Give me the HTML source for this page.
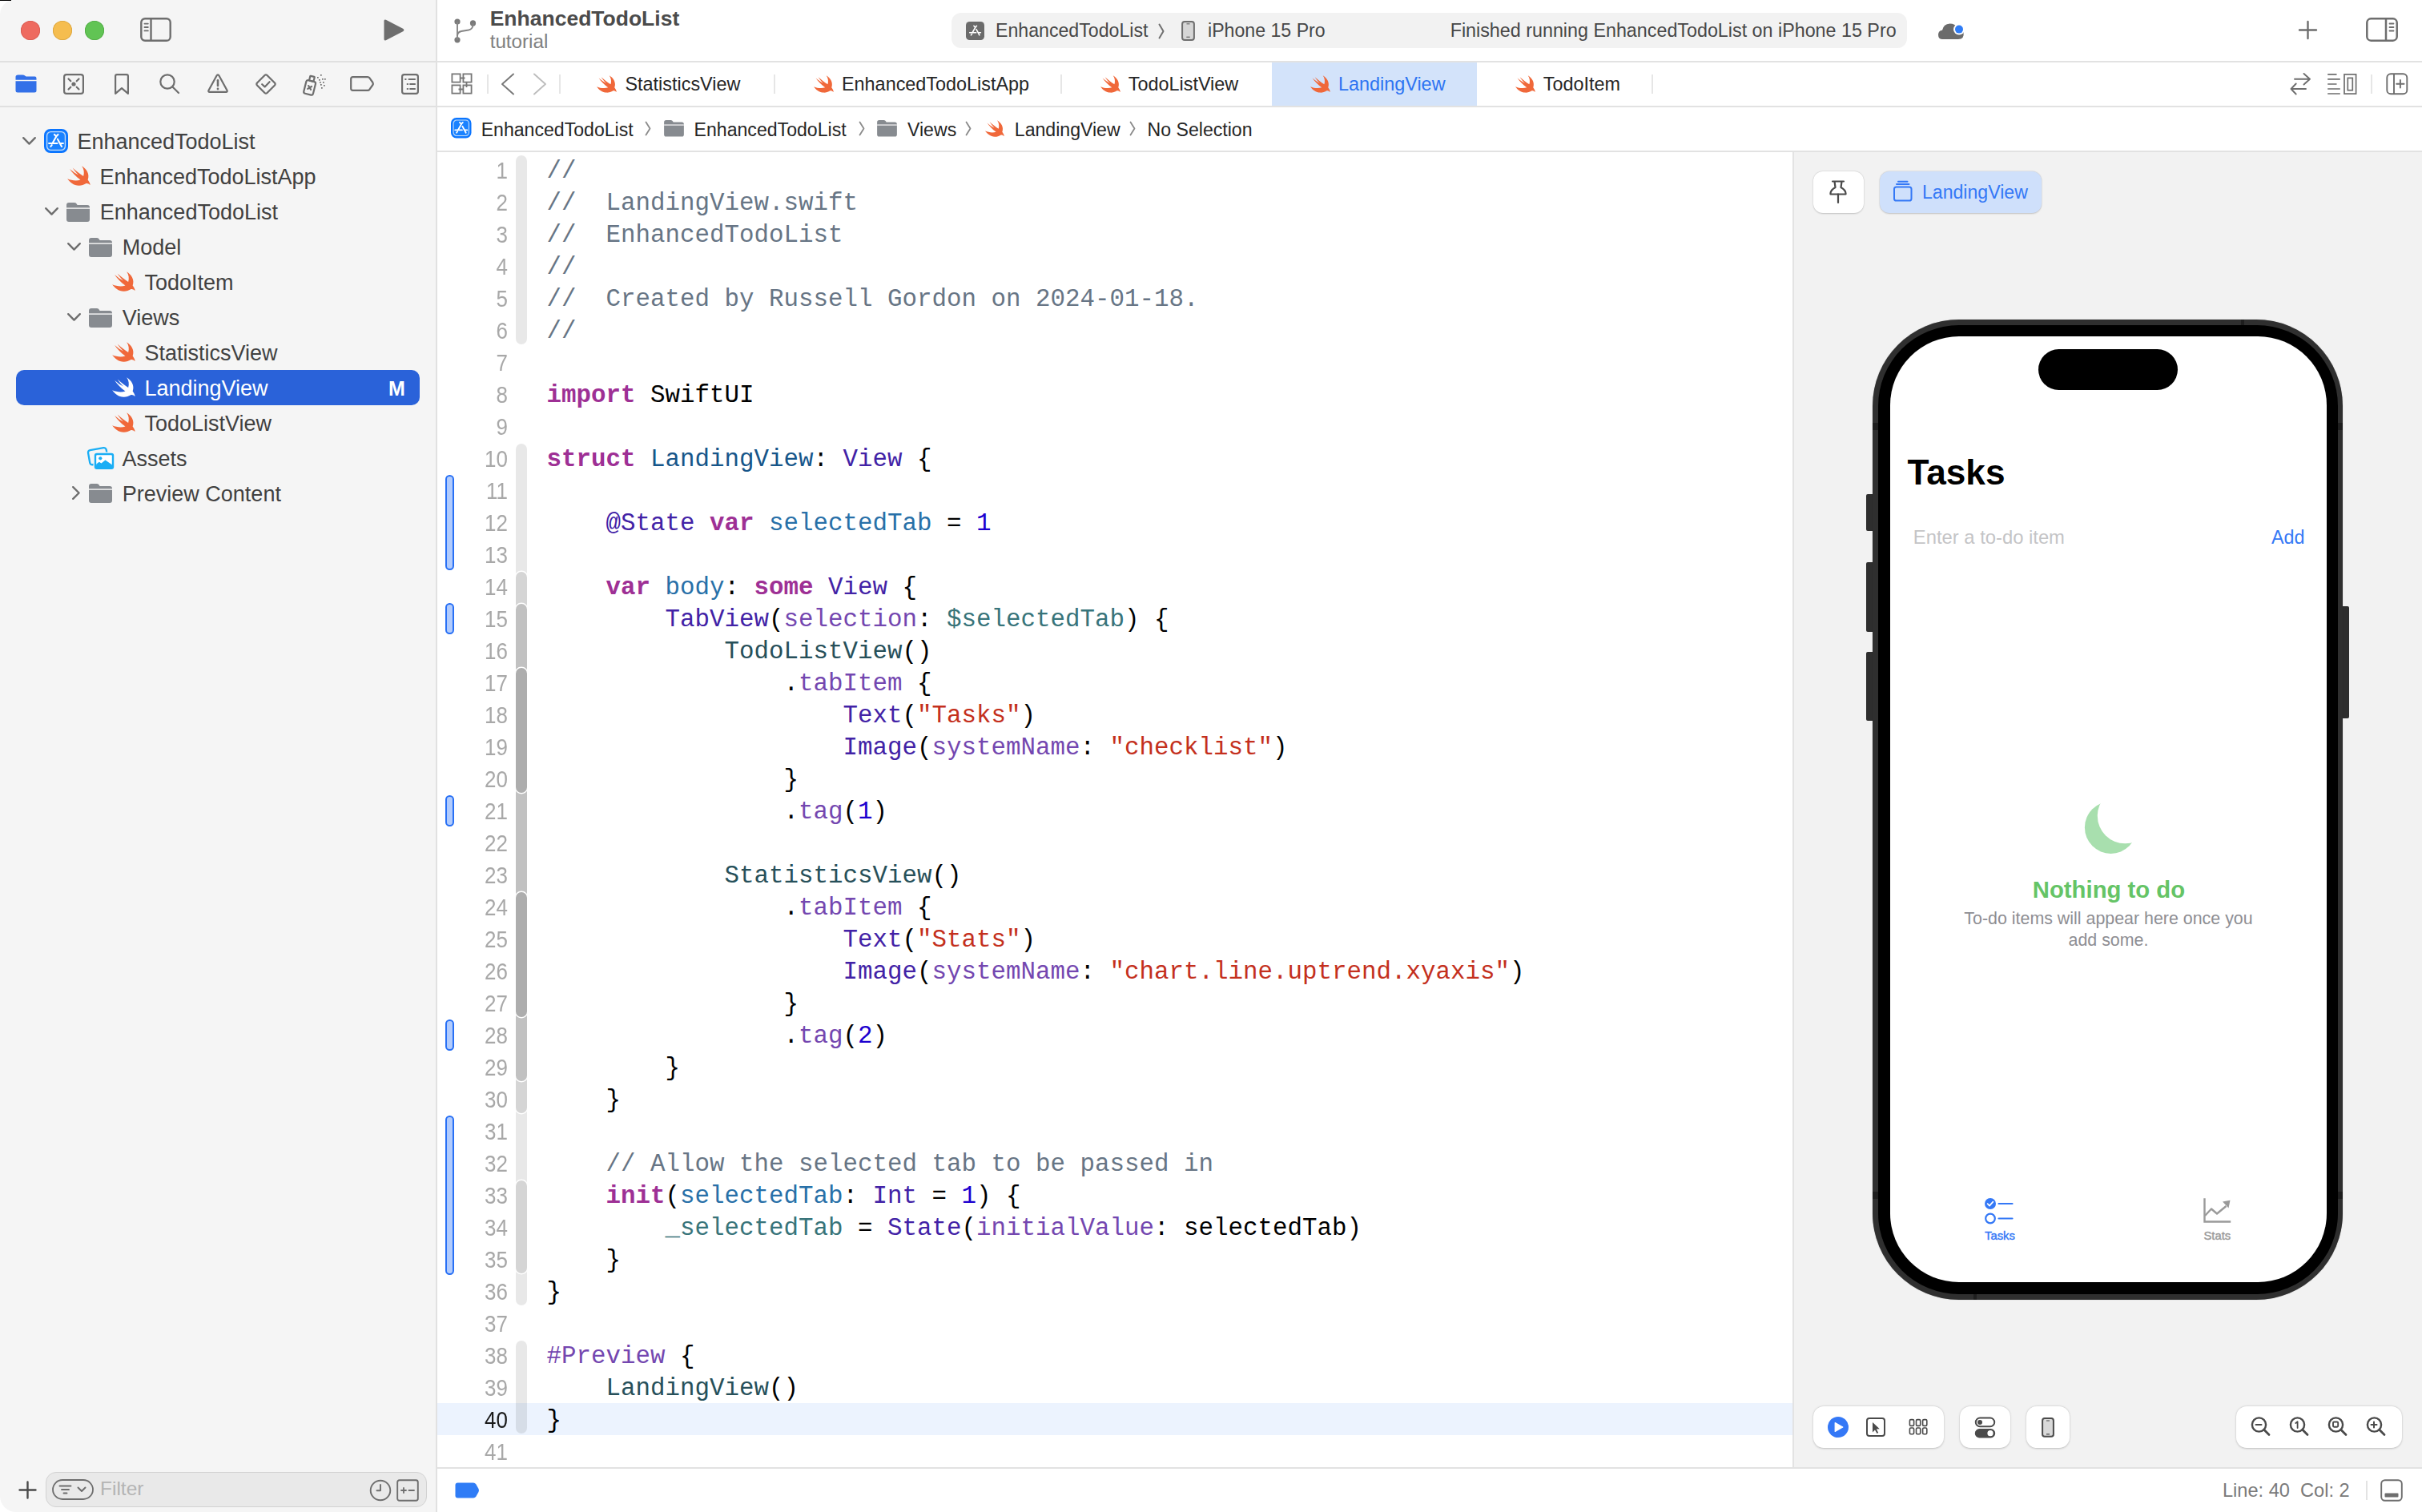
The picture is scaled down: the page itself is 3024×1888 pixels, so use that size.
<!DOCTYPE html><html><head><meta charset="utf-8"><title>Xcode</title><style>html,body{margin:0;padding:0;}body{width:3024px;height:1888px;position:relative;overflow:hidden;background:#ffffff;}svg{display:block}</style></head><body><div style="position:absolute;left:0px;top:0px;width:546px;height:1888px;background:#f5f5f5;border-top-left-radius:18px;border-bottom-left-radius:20px;"></div>
<div style="position:absolute;left:0px;top:0px;width:14px;height:1px;background:#000;"></div>
<div style="position:absolute;left:544px;top:0px;width:2px;height:1888px;background:#e1e1e1;"></div>
<div style="position:absolute;left:26px;top:26px;width:24px;height:24px;background:#ee6a5f;border-radius:50%;box-shadow:inset 0 0 0 0.8px #d65a50;"></div>
<div style="position:absolute;left:66px;top:26px;width:24px;height:24px;background:#f5bd4f;border-radius:50%;box-shadow:inset 0 0 0 0.8px #d9a33d;"></div>
<div style="position:absolute;left:106px;top:26px;width:24px;height:24px;background:#61c454;border-radius:50%;box-shadow:inset 0 0 0 0.8px #50a944;"></div>
<svg style="position:absolute;left:175px;top:22px;overflow:visible;" width="39" height="30" viewBox="0 0 39 30"><rect x="1.3" y="1.3" width="36.4" height="27.4" rx="4.8" fill="none" stroke="#6e6e6e" stroke-width="2.4"/><path d="M13.5,1.3 L13.5,28.7" stroke="#6e6e6e" stroke-width="2.4"/><path d="M5.5,7.6 L9.8,7.6 M5.5,12 L9.8,12 M5.5,16.4 L9.8,16.4" stroke="#6e6e6e" stroke-width="1.9" stroke-linecap="round"/></svg>
<svg style="position:absolute;left:478px;top:23px;overflow:visible;" width="28" height="30" viewBox="0 0 28 30"><path d="M1.5,3.2 Q1.5,0.6 3.9,1.8 L25.6,12.9 Q27.4,14.5 25.6,16.1 L3.9,27.2 Q1.5,28.4 1.5,25.8 Z" fill="#6e6e6e"/></svg>
<div style="position:absolute;left:0px;top:76px;width:544px;height:2px;background:#e0e0e0;"></div>
<div style="position:absolute;left:0px;top:132px;width:544px;height:2px;background:#e0e0e0;"></div>
<svg style="position:absolute;left:19px;top:93px;overflow:visible;" width="27" height="23" viewBox="0 0 26 23"><path d="M0,3 Q0,0.5 3,0.5 L8.5,0.5 Q10.5,0.5 12,1.8 L13,2.6 L24,2.6 Q26,2.6 26,5 L26,6.8 L0,6.8 Z" fill="#3370e8"/><path d="M0,8.3 L26,8.3 L26,20 Q26,22.5 23.5,22.5 L2.5,22.5 Q0,22.5 0,20 Z" fill="#3370e8"/></svg>
<svg style="position:absolute;left:79px;top:92px;overflow:visible;" width="26" height="26" viewBox="0 0 26 26"><rect x="1.1" y="1.1" width="23.8" height="23.8" rx="3" fill="none" stroke="#6e6e6e" stroke-width="2.2" stroke-linecap="round" stroke-linejoin="round"/><circle cx="13" cy="13" r="2.6" fill="#6e6e6e"/><path d="M6.5,6.5 L9.3,9.3 M19.5,6.5 L16.7,9.3 M6.5,19.5 L9.3,16.7 M19.5,19.5 L16.7,16.7" fill="none" stroke="#6e6e6e" stroke-width="2.2" stroke-linecap="round" stroke-linejoin="round"/></svg>
<svg style="position:absolute;left:143px;top:92px;overflow:visible;" width="18" height="26" viewBox="0 0 18 26"><path d="M1.1,24.9 L1.1,3 Q1.1,1.1 3,1.1 L15,1.1 Q16.9,1.1 16.9,3 L16.9,24.9 L9,18.2 Z" fill="none" stroke="#6e6e6e" stroke-width="2.2" stroke-linecap="round" stroke-linejoin="round"/></svg>
<svg style="position:absolute;left:199px;top:92px;overflow:visible;" width="26" height="26" viewBox="0 0 26 26"><circle cx="10" cy="10" r="8.7" fill="none" stroke="#6e6e6e" stroke-width="2.2" stroke-linecap="round" stroke-linejoin="round"/><path d="M16.5,16.5 L24,24" fill="none" stroke="#6e6e6e" stroke-width="2.2" stroke-linecap="round" stroke-linejoin="round" stroke-width="2.8"/></svg>
<svg style="position:absolute;left:259px;top:92px;overflow:visible;" width="26" height="24" viewBox="0 0 26 24"><path d="M13,1.4 Q13.9,1.4 14.5,2.5 L24.6,21 Q25.2,22.8 23.3,22.8 L2.7,22.8 Q0.8,22.8 1.4,21 L11.5,2.5 Q12.1,1.4 13,1.4 Z" fill="none" stroke="#6e6e6e" stroke-width="2.2" stroke-linecap="round" stroke-linejoin="round"/><path d="M13,8.2 L13,15" stroke="#6e6e6e" stroke-width="2.6" stroke-linecap="round"/><circle cx="13" cy="19" r="1.4" fill="#6e6e6e"/></svg>
<svg style="position:absolute;left:319px;top:92px;overflow:visible;" width="26" height="26" viewBox="0 0 26 26"><path d="M13,1.3 Q13.8,1.3 14.5,2 L24,11.5 Q25.3,13 24,14.5 L14.5,24 Q13,25.3 11.5,24 L2,14.5 Q0.7,13 2,11.5 L11.5,2 Q12.2,1.3 13,1.3 Z" fill="none" stroke="#6e6e6e" stroke-width="2.2" stroke-linecap="round" stroke-linejoin="round"/><path d="M8.2,13.2 L11.6,16.4 L17.6,10.2" fill="none" stroke="#6e6e6e" stroke-width="2.2" stroke-linecap="round" stroke-linejoin="round" stroke-width="2.4"/></svg>
<svg style="position:absolute;left:377px;top:91px;overflow:visible;" width="31" height="28" viewBox="0 0 31 28"><g transform="rotate(14 10 17)"><rect x="4" y="10" width="12" height="17" rx="2.2" fill="none" stroke="#6e6e6e" stroke-width="2.2" stroke-linecap="round" stroke-linejoin="round"/><rect x="7.2" y="4" width="5.6" height="6" rx="0.6" fill="none" stroke="#6e6e6e" stroke-width="2.2" stroke-linecap="round" stroke-linejoin="round"/><path d="M8,16.5 L12,20.5 M12,16.5 L8,20.5" fill="none" stroke="#6e6e6e" stroke-width="2.2" stroke-linecap="round" stroke-linejoin="round" stroke-width="1.8"/></g><rect x="19" y="5" width="1.7" height="1.7" fill="#6e6e6e"/><rect x="23" y="2" width="1.7" height="1.7" fill="#6e6e6e"/><rect x="21" y="8" width="1.7" height="1.7" fill="#6e6e6e"/><rect x="25" y="7" width="1.7" height="1.7" fill="#6e6e6e"/><rect x="28" y="7" width="1.7" height="1.7" fill="#6e6e6e"/><rect x="22" y="11" width="1.7" height="1.7" fill="#6e6e6e"/><rect x="26" y="11" width="1.7" height="1.7" fill="#6e6e6e"/><rect x="23" y="14" width="1.7" height="1.7" fill="#6e6e6e"/><rect x="27" y="15" width="1.7" height="1.7" fill="#6e6e6e"/><rect x="24" y="18" width="1.7" height="1.7" fill="#6e6e6e"/></svg>
<svg style="position:absolute;left:437px;top:95px;overflow:visible;" width="30" height="19" viewBox="0 0 30 19"><path d="M3.5,1.2 L22,1.2 Q23.5,1.2 24.4,2.3 L28.4,8 Q29.2,9.5 28.4,11 L24.4,16.7 Q23.5,17.8 22,17.8 L3.5,17.8 Q1.2,17.8 1.2,15.5 L1.2,3.5 Q1.2,1.2 3.5,1.2 Z" fill="none" stroke="#6e6e6e" stroke-width="2.2" stroke-linecap="round" stroke-linejoin="round"/></svg>
<svg style="position:absolute;left:501px;top:92px;overflow:visible;" width="22" height="26" viewBox="0 0 22 26"><rect x="1.1" y="1.1" width="19.8" height="23.8" rx="2.6" fill="none" stroke="#6e6e6e" stroke-width="2.2" stroke-linecap="round" stroke-linejoin="round"/><path d="M5.2,7 L5.6,7 M7.7,13 L8.1,13 M7.7,19 L8.1,19" fill="none" stroke="#6e6e6e" stroke-width="2.2" stroke-linecap="round" stroke-linejoin="round" stroke-width="1.8"/><path d="M9.6,7 L17,7 M11.2,13 L17,13 M11.2,19 L17,19" fill="none" stroke="#6e6e6e" stroke-width="2.2" stroke-linecap="round" stroke-linejoin="round" stroke-width="1.9"/></svg>
<div style="position:absolute;left:20px;top:462px;width:504px;height:44px;background:#2a62d9;border-radius:10px;"></div>
<svg style="position:absolute;left:27.5px;top:171.0px;overflow:visible;" width="17" height="10" viewBox="0 0 17 10"><path d="M1.2,1.2 L8.5,8.6 L15.8,1.2" fill="none" stroke="#6e6e6e" stroke-width="2.4" stroke-linecap="round" stroke-linejoin="round"/></svg>
<svg style="position:absolute;left:54.5px;top:161.0px;overflow:visible;" width="30" height="30" viewBox="0 0 30 30"><rect x="1" y="1" width="28" height="28" rx="7" fill="#1a82ff" stroke="#0a74ff" stroke-width="2"/><rect x="3.6" y="3.6" width="22.8" height="22.8" rx="4.8" fill="none" stroke="#c4dcf8" stroke-width="1.3"/><g stroke="#ffffff" stroke-width="2.1" stroke-linecap="round" stroke-linejoin="round" fill="none"><path d="M12.9,6.9 L15.2,9.3 L17.5,6.9"/><path d="M15.2,9.6 L10.7,17.6"/><path d="M6.1,18 L16.5,18 M20.4,18 L23.9,18"/><path d="M16.9,12.7 L22,22"/><path d="M8.3,22 L9.7,20.1"/></g></svg>
<div style="position:absolute;left:96.4px;top:164.1px;font-family:'Liberation Sans', sans-serif;font-size:27px;line-height:1;color:#414141;font-weight:normal;white-space:pre;">EnhancedTodoList</div>
<svg style="position:absolute;left:83.7px;top:207.45px;overflow:visible;" width="29" height="25" viewBox="0 0 29 25.3"><path d="M18.2,0.2 C24,4 28.5,10 25.8,17.7 C27.5,20 28.5,22 28.8,24.3 C27,22.8 25.5,22 23.8,22.3 C21,24 17.5,25.2 14.5,25.1 C8,25 3,20.5 0,16.4 C5,18.5 11.5,19.5 16.5,17.7 C11,14 6,8.5 3,4.1 C7,7.5 10.5,10 13.9,11.7 C11,8.5 8.5,5.5 6.6,2.5 C11,6.5 16,10.5 20.2,13.1 C21.5,9 21,4 18.2,0.2 Z" fill="#f0683a"/></svg>
<div style="position:absolute;left:124.4px;top:208.0px;font-family:'Liberation Sans', sans-serif;font-size:27px;line-height:1;color:#414141;font-weight:normal;white-space:pre;">EnhancedTodoListApp</div>
<svg style="position:absolute;left:55.5px;top:258.9px;overflow:visible;" width="17" height="10" viewBox="0 0 17 10"><path d="M1.2,1.2 L8.5,8.6 L15.8,1.2" fill="none" stroke="#6e6e6e" stroke-width="2.4" stroke-linecap="round" stroke-linejoin="round"/></svg>
<svg style="position:absolute;left:83.0px;top:252.7px;overflow:visible;" width="29" height="24" viewBox="0 0 29 24"><path d="M0,3 Q0,0 3,0 L10,0 Q12,0 13,2 L13.5,3 L26,3 Q29,3 29,6 L29,21 Q29,24 26,24 L3,24 Q0,24 0,21 Z" fill="#878b90"/><rect x="0" y="6.3" width="29" height="1.6" fill="#f5f5f5" opacity="0.9"/></svg>
<div style="position:absolute;left:124.8px;top:251.9px;font-family:'Liberation Sans', sans-serif;font-size:27px;line-height:1;color:#414141;font-weight:normal;white-space:pre;">EnhancedTodoList</div>
<svg style="position:absolute;left:83.5px;top:302.85px;overflow:visible;" width="17" height="10" viewBox="0 0 17 10"><path d="M1.2,1.2 L8.5,8.6 L15.8,1.2" fill="none" stroke="#6e6e6e" stroke-width="2.4" stroke-linecap="round" stroke-linejoin="round"/></svg>
<svg style="position:absolute;left:111.0px;top:296.65000000000003px;overflow:visible;" width="29" height="24" viewBox="0 0 29 24"><path d="M0,3 Q0,0 3,0 L10,0 Q12,0 13,2 L13.5,3 L26,3 Q29,3 29,6 L29,21 Q29,24 26,24 L3,24 Q0,24 0,21 Z" fill="#878b90"/><rect x="0" y="6.3" width="29" height="1.6" fill="#f5f5f5" opacity="0.9"/></svg>
<div style="position:absolute;left:152.8px;top:295.9px;font-family:'Liberation Sans', sans-serif;font-size:27px;line-height:1;color:#414141;font-weight:normal;white-space:pre;">Model</div>
<svg style="position:absolute;left:139.7px;top:339.3px;overflow:visible;" width="29" height="25" viewBox="0 0 29 25.3"><path d="M18.2,0.2 C24,4 28.5,10 25.8,17.7 C27.5,20 28.5,22 28.8,24.3 C27,22.8 25.5,22 23.8,22.3 C21,24 17.5,25.2 14.5,25.1 C8,25 3,20.5 0,16.4 C5,18.5 11.5,19.5 16.5,17.7 C11,14 6,8.5 3,4.1 C7,7.5 10.5,10 13.9,11.7 C11,8.5 8.5,5.5 6.6,2.5 C11,6.5 16,10.5 20.2,13.1 C21.5,9 21,4 18.2,0.2 Z" fill="#f0683a"/></svg>
<div style="position:absolute;left:180.4px;top:339.9px;font-family:'Liberation Sans', sans-serif;font-size:27px;line-height:1;color:#414141;font-weight:normal;white-space:pre;">TodoItem</div>
<svg style="position:absolute;left:83.5px;top:390.75px;overflow:visible;" width="17" height="10" viewBox="0 0 17 10"><path d="M1.2,1.2 L8.5,8.6 L15.8,1.2" fill="none" stroke="#6e6e6e" stroke-width="2.4" stroke-linecap="round" stroke-linejoin="round"/></svg>
<svg style="position:absolute;left:111.0px;top:384.55px;overflow:visible;" width="29" height="24" viewBox="0 0 29 24"><path d="M0,3 Q0,0 3,0 L10,0 Q12,0 13,2 L13.5,3 L26,3 Q29,3 29,6 L29,21 Q29,24 26,24 L3,24 Q0,24 0,21 Z" fill="#878b90"/><rect x="0" y="6.3" width="29" height="1.6" fill="#f5f5f5" opacity="0.9"/></svg>
<div style="position:absolute;left:152.8px;top:383.8px;font-family:'Liberation Sans', sans-serif;font-size:27px;line-height:1;color:#414141;font-weight:normal;white-space:pre;">Views</div>
<svg style="position:absolute;left:139.7px;top:427.20000000000005px;overflow:visible;" width="29" height="25" viewBox="0 0 29 25.3"><path d="M18.2,0.2 C24,4 28.5,10 25.8,17.7 C27.5,20 28.5,22 28.8,24.3 C27,22.8 25.5,22 23.8,22.3 C21,24 17.5,25.2 14.5,25.1 C8,25 3,20.5 0,16.4 C5,18.5 11.5,19.5 16.5,17.7 C11,14 6,8.5 3,4.1 C7,7.5 10.5,10 13.9,11.7 C11,8.5 8.5,5.5 6.6,2.5 C11,6.5 16,10.5 20.2,13.1 C21.5,9 21,4 18.2,0.2 Z" fill="#f0683a"/></svg>
<div style="position:absolute;left:180.4px;top:427.8px;font-family:'Liberation Sans', sans-serif;font-size:27px;line-height:1;color:#414141;font-weight:normal;white-space:pre;">StatisticsView</div>
<svg style="position:absolute;left:139.7px;top:471.15000000000003px;overflow:visible;" width="29" height="25" viewBox="0 0 29 25.3"><path d="M18.2,0.2 C24,4 28.5,10 25.8,17.7 C27.5,20 28.5,22 28.8,24.3 C27,22.8 25.5,22 23.8,22.3 C21,24 17.5,25.2 14.5,25.1 C8,25 3,20.5 0,16.4 C5,18.5 11.5,19.5 16.5,17.7 C11,14 6,8.5 3,4.1 C7,7.5 10.5,10 13.9,11.7 C11,8.5 8.5,5.5 6.6,2.5 C11,6.5 16,10.5 20.2,13.1 C21.5,9 21,4 18.2,0.2 Z" fill="#ffffff"/></svg>
<div style="position:absolute;left:180.4px;top:471.7px;font-family:'Liberation Sans', sans-serif;font-size:27px;line-height:1;color:#ffffff;font-weight:normal;white-space:pre;">LandingView</div>
<svg style="position:absolute;left:139.7px;top:515.1px;overflow:visible;" width="29" height="25" viewBox="0 0 29 25.3"><path d="M18.2,0.2 C24,4 28.5,10 25.8,17.7 C27.5,20 28.5,22 28.8,24.3 C27,22.8 25.5,22 23.8,22.3 C21,24 17.5,25.2 14.5,25.1 C8,25 3,20.5 0,16.4 C5,18.5 11.5,19.5 16.5,17.7 C11,14 6,8.5 3,4.1 C7,7.5 10.5,10 13.9,11.7 C11,8.5 8.5,5.5 6.6,2.5 C11,6.5 16,10.5 20.2,13.1 C21.5,9 21,4 18.2,0.2 Z" fill="#f0683a"/></svg>
<div style="position:absolute;left:180.4px;top:515.6px;font-family:'Liberation Sans', sans-serif;font-size:27px;line-height:1;color:#414141;font-weight:normal;white-space:pre;">TodoListView</div>
<svg style="position:absolute;left:108px;top:555.55px;overflow:visible;" width="36" height="32" viewBox="0 0 36 32"><g transform="rotate(-10 14 14)"><rect x="3" y="4.5" width="23" height="18.5" rx="3" fill="none" stroke="#1aaef5" stroke-width="2.3"/></g><rect x="8.5" y="8.5" width="26" height="22" rx="3.5" fill="#f5f5f5"/><rect x="9.8" y="9.8" width="24.4" height="20.2" rx="3" fill="#1aaef5"/><rect x="12.2" y="12.2" width="19.6" height="13" rx="1" fill="#ffffff"/><circle cx="17.3" cy="16.3" r="2.1" fill="#1aaef5"/><path d="M12.2,26 L12.2,23.6 L15.8,20.8 L18.5,22.6 L23.5,18.6 L31.8,24.2 L31.8,26 Z" fill="#1aaef5"/></svg>
<div style="position:absolute;left:152.4px;top:559.6px;font-family:'Liberation Sans', sans-serif;font-size:27px;line-height:1;color:#414141;font-weight:normal;white-space:pre;">Assets</div>
<svg style="position:absolute;left:89.5px;top:607.0px;overflow:visible;" width="10" height="17" viewBox="0 0 10 17"><path d="M1.2,1.2 L8.6,8.5 L1.2,15.8" fill="none" stroke="#6e6e6e" stroke-width="2.4" stroke-linecap="round" stroke-linejoin="round"/></svg>
<svg style="position:absolute;left:111.0px;top:604.3px;overflow:visible;" width="29" height="24" viewBox="0 0 29 24"><path d="M0,3 Q0,0 3,0 L10,0 Q12,0 13,2 L13.5,3 L26,3 Q29,3 29,6 L29,21 Q29,24 26,24 L3,24 Q0,24 0,21 Z" fill="#878b90"/><rect x="0" y="6.3" width="29" height="1.6" fill="#f5f5f5" opacity="0.9"/></svg>
<div style="position:absolute;left:152.8px;top:603.5px;font-family:'Liberation Sans', sans-serif;font-size:27px;line-height:1;color:#414141;font-weight:normal;white-space:pre;">Preview Content</div>
<div style="position:absolute;left:485.0px;top:473.4px;font-family:'Liberation Sans', sans-serif;font-size:25px;line-height:1;color:#ffffff;font-weight:bold;white-space:pre;">M</div>
<svg style="position:absolute;left:23px;top:1849px;overflow:visible;" width="23" height="23" viewBox="0 0 23 23"><path d="M11.5,1.5 L11.5,21.5 M1.5,11.5 L21.5,11.5" stroke="#4a4a4a" stroke-width="2.4" stroke-linecap="round"/></svg>
<div style="position:absolute;left:57px;top:1838px;width:476px;height:44px;box-sizing:border-box;background:#e9e9e9;border:1px solid #d2d2d2;border-radius:13px;"></div>
<svg style="position:absolute;left:65px;top:1847px;overflow:visible;" width="52" height="26" viewBox="0 0 52 26"><rect x="1" y="1" width="50" height="24" rx="12" fill="none" stroke="#6e6e6e" stroke-width="1.8"/><path d="M9.5,8.5 L23.5,8.5 M12,13 L21,13 M14.5,17.5 L18.5,17.5" stroke="#6e6e6e" stroke-width="1.9" stroke-linecap="round"/><path d="M32.5,10.5 L37,15 L41.5,10.5" fill="none" stroke="#6e6e6e" stroke-width="2" stroke-linecap="round" stroke-linejoin="round"/></svg>
<div style="position:absolute;left:125.0px;top:1847.2px;font-family:'Liberation Sans', sans-serif;font-size:24.5px;line-height:1;color:#b4b4b4;font-weight:normal;white-space:pre;">Filter</div>
<svg style="position:absolute;left:461px;top:1847px;overflow:visible;" width="28" height="28" viewBox="0 0 28 28"><circle cx="14" cy="14" r="12.3" fill="none" stroke="#6e6e6e" stroke-width="1.9"/><path d="M14,7 L14,14.3 L9.5,14.3" fill="none" stroke="#6e6e6e" stroke-width="1.9" stroke-linecap="round" stroke-linejoin="round"/></svg>
<svg style="position:absolute;left:495px;top:1847px;overflow:visible;" width="28" height="28" viewBox="0 0 28 28"><rect x="1.2" y="1.2" width="25.6" height="25.6" rx="2.5" fill="none" stroke="#6e6e6e" stroke-width="1.9"/><path d="M6,14 L12,14 M9,11 L9,17 M15.5,14 L22,14" stroke="#6e6e6e" stroke-width="1.8" stroke-linecap="round"/></svg>
<div style="position:absolute;left:546px;top:0px;width:2478px;height:76px;background:#ffffff;"></div>
<div style="position:absolute;left:546px;top:76px;width:2478px;height:2px;background:#e2e2e2;"></div>
<div style="position:absolute;left:546px;top:132px;width:2478px;height:2px;background:#e2e2e2;"></div>
<div style="position:absolute;left:546px;top:188px;width:2478px;height:2px;background:#e2e2e2;"></div>
<svg style="position:absolute;left:565px;top:22px;overflow:visible;" width="32" height="33" viewBox="0 0 32 33"><circle cx="6" cy="5" r="3.6" fill="#7a7a7a"/><circle cx="6" cy="27.8" r="3.6" fill="#7a7a7a"/><circle cx="25.5" cy="6.9" r="3.6" fill="#7a7a7a"/><path d="M6,5 L6,27.8" stroke="#858585" stroke-width="1.9"/><path d="M25.5,6.9 L25.5,9.5 Q25,14.5 20,15.5 L11,17 Q6,18 6,23" fill="none" stroke="#858585" stroke-width="1.9"/></svg>
<div style="position:absolute;left:611.7px;top:10.0px;font-family:'Liberation Sans', sans-serif;font-size:26.5px;line-height:1;color:#4b4b4b;font-weight:bold;white-space:pre;">EnhancedTodoList</div>
<div style="position:absolute;left:611.7px;top:40.4px;font-family:'Liberation Sans', sans-serif;font-size:24.2px;line-height:1;color:#808080;font-weight:normal;white-space:pre;">tutorial</div>
<div style="position:absolute;left:1188px;top:16px;width:1193px;height:44px;background:#f2f2f2;border-radius:12px;"></div>
<svg style="position:absolute;left:1206px;top:27px;overflow:visible;" width="23" height="23" viewBox="0 0 23 23"><rect x="0" y="0" width="23" height="23" rx="4.6" fill="#6b6b6b"/><g stroke="#ffffff" stroke-width="1.6" stroke-linecap="round" stroke-linejoin="round" fill="none"><path d="M9.9,5.3 L11.7,7.1 L13.5,5.3"/><path d="M11.7,7.4 L8.2,13.5"/><path d="M4.7,13.8 L12.7,13.8 M15.7,13.8 L18.4,13.8"/><path d="M13,9.7 L16.9,16.9"/><path d="M6.4,16.9 L7.5,15.4"/></g></svg>
<div style="position:absolute;left:1243.0px;top:27.3px;font-family:'Liberation Sans', sans-serif;font-size:23.15px;line-height:1;color:#474747;font-weight:normal;white-space:pre;">EnhancedTodoList</div>
<svg style="position:absolute;left:1446px;top:28.5px;overflow:visible;" width="8" height="20" viewBox="0 0 8 20"><path d="M1.5,1.5 L6.5,10.0 L1.5,18.5" fill="none" stroke="#707070" stroke-width="2.0" stroke-linecap="round" stroke-linejoin="round"/></svg>
<svg style="position:absolute;left:1475px;top:26px;overflow:visible;" width="17" height="25" viewBox="0 0 17 25"><rect x="1.1" y="1.1" width="14.8" height="22.8" rx="3" fill="#d6d6d6" stroke="#6e6e6e" stroke-width="2"/><path d="M6.3,20.3 L10.7,20.3" stroke="#6e6e6e" stroke-width="1.3"/><path d="M6.5,3.8 L10.5,3.8" stroke="#6e6e6e" stroke-width="1.2"/></svg>
<div style="position:absolute;left:1508.0px;top:27.3px;font-family:'Liberation Sans', sans-serif;font-size:23.15px;line-height:1;color:#474747;font-weight:normal;white-space:pre;">iPhone 15 Pro</div>
<div style="position:absolute;left:1810.7px;top:27.2px;font-family:'Liberation Sans', sans-serif;font-size:23.3px;line-height:1;color:#474747;font-weight:normal;white-space:pre;">Finished running EnhancedTodoList on iPhone 15 Pro</div>
<svg style="position:absolute;left:2419px;top:25px;overflow:visible;" width="36" height="26" viewBox="0 0 36 26"><path d="M6.5,24 Q1,24 1,18.5 Q1,13.5 6,12.8 Q7.5,5 15.5,4.5 Q22,4.5 24.5,9.5 Q31,9.5 32.5,15 Q34,24 26,24 Z" fill="#6b6b6b"/><circle cx="27" cy="11.6" r="7" fill="#ffffff"/><circle cx="27" cy="11.6" r="5" fill="#2f7cf6"/></svg>
<svg style="position:absolute;left:2869px;top:25px;overflow:visible;" width="25" height="25" viewBox="0 0 25 25"><path d="M12.5,2 L12.5,23 M2,12.5 L23,12.5" stroke="#6e6e6e" stroke-width="2.4" stroke-linecap="round"/></svg>
<svg style="position:absolute;left:2954px;top:22px;overflow:visible;" width="40" height="30" viewBox="0 0 40 30"><rect x="1.3" y="1.3" width="37.4" height="27.4" rx="5" fill="none" stroke="#6e6e6e" stroke-width="2.5"/><path d="M25,1.3 L25,28.7" stroke="#6e6e6e" stroke-width="2.5"/><path d="M29.5,7.5 L34.5,7.5 M29.5,12 L34.5,12 M29.5,16.5 L34.5,16.5" stroke="#6e6e6e" stroke-width="1.8" stroke-linecap="round"/></svg>
<div style="position:absolute;left:1588px;top:78px;width:256px;height:54px;background:#d3e3fa;"></div>
<svg style="position:absolute;left:563px;top:91px;overflow:visible;" width="28" height="28" viewBox="0 0 28 28"><g fill="none" stroke="#777" stroke-width="1.8"><rect x="1.4" y="1.4" width="10.2" height="10.2"/><rect x="15.4" y="1.4" width="10.2" height="10.2"/><rect x="1.4" y="15.4" width="10.2" height="10.2"/><rect x="15.4" y="15.4" width="10.2" height="10.2"/><path d="M11.6,6.5 L17.5,6.5 M19.5,11.6 L19.5,18 M9.5,20.5 L15.4,20.5"/></g></svg>
<div style="position:absolute;left:608px;top:93px;width:2px;height:24px;background:#e6e6e6;"></div>
<svg style="position:absolute;left:625px;top:91px;overflow:visible;" width="18" height="28" viewBox="0 0 18 28"><path d="M16,1.5 L2,14 L16,26.5" fill="none" stroke="#787878" stroke-width="1.9" stroke-linecap="round" stroke-linejoin="round"/></svg>
<svg style="position:absolute;left:665px;top:91px;overflow:visible;" width="18" height="28" viewBox="0 0 18 28"><path d="M2,1.5 L16,14 L2,26.5" fill="none" stroke="#bdbdbd" stroke-width="1.9" stroke-linecap="round" stroke-linejoin="round"/></svg>
<div style="position:absolute;left:698px;top:93px;width:2px;height:24px;background:#e6e6e6;"></div>
<svg style="position:absolute;left:745px;top:94px;overflow:visible;" width="25" height="21.8" viewBox="0 0 29 25.3"><path d="M18.2,0.2 C24,4 28.5,10 25.8,17.7 C27.5,20 28.5,22 28.8,24.3 C27,22.8 25.5,22 23.8,22.3 C21,24 17.5,25.2 14.5,25.1 C8,25 3,20.5 0,16.4 C5,18.5 11.5,19.5 16.5,17.7 C11,14 6,8.5 3,4.1 C7,7.5 10.5,10 13.9,11.7 C11,8.5 8.5,5.5 6.6,2.5 C11,6.5 16,10.5 20.2,13.1 C21.5,9 21,4 18.2,0.2 Z" fill="#f0683a"/></svg>
<div style="position:absolute;left:780.5px;top:93.7px;font-family:'Liberation Sans', sans-serif;font-size:23.4px;line-height:1;color:#262626;font-weight:normal;white-space:pre;width:149.5px">StatisticsView</div>
<svg style="position:absolute;left:1015.7px;top:94px;overflow:visible;" width="25" height="21.8" viewBox="0 0 29 25.3"><path d="M18.2,0.2 C24,4 28.5,10 25.8,17.7 C27.5,20 28.5,22 28.8,24.3 C27,22.8 25.5,22 23.8,22.3 C21,24 17.5,25.2 14.5,25.1 C8,25 3,20.5 0,16.4 C5,18.5 11.5,19.5 16.5,17.7 C11,14 6,8.5 3,4.1 C7,7.5 10.5,10 13.9,11.7 C11,8.5 8.5,5.5 6.6,2.5 C11,6.5 16,10.5 20.2,13.1 C21.5,9 21,4 18.2,0.2 Z" fill="#f0683a"/></svg>
<div style="position:absolute;left:1051.0px;top:93.7px;font-family:'Liberation Sans', sans-serif;font-size:23.4px;line-height:1;color:#262626;font-weight:normal;white-space:pre;width:236px">EnhancedTodoListApp</div>
<svg style="position:absolute;left:1373.5px;top:94px;overflow:visible;" width="25" height="21.8" viewBox="0 0 29 25.3"><path d="M18.2,0.2 C24,4 28.5,10 25.8,17.7 C27.5,20 28.5,22 28.8,24.3 C27,22.8 25.5,22 23.8,22.3 C21,24 17.5,25.2 14.5,25.1 C8,25 3,20.5 0,16.4 C5,18.5 11.5,19.5 16.5,17.7 C11,14 6,8.5 3,4.1 C7,7.5 10.5,10 13.9,11.7 C11,8.5 8.5,5.5 6.6,2.5 C11,6.5 16,10.5 20.2,13.1 C21.5,9 21,4 18.2,0.2 Z" fill="#f0683a"/></svg>
<div style="position:absolute;left:1408.8px;top:93.7px;font-family:'Liberation Sans', sans-serif;font-size:23.4px;line-height:1;color:#262626;font-weight:normal;white-space:pre;width:142.2px">TodoListView</div>
<svg style="position:absolute;left:1635.8px;top:94px;overflow:visible;" width="25" height="21.8" viewBox="0 0 29 25.3"><path d="M18.2,0.2 C24,4 28.5,10 25.8,17.7 C27.5,20 28.5,22 28.8,24.3 C27,22.8 25.5,22 23.8,22.3 C21,24 17.5,25.2 14.5,25.1 C8,25 3,20.5 0,16.4 C5,18.5 11.5,19.5 16.5,17.7 C11,14 6,8.5 3,4.1 C7,7.5 10.5,10 13.9,11.7 C11,8.5 8.5,5.5 6.6,2.5 C11,6.5 16,10.5 20.2,13.1 C21.5,9 21,4 18.2,0.2 Z" fill="#f0683a"/></svg>
<div style="position:absolute;left:1671.0px;top:93.7px;font-family:'Liberation Sans', sans-serif;font-size:23.4px;line-height:1;color:#2d74f2;font-weight:normal;white-space:pre;width:136px">LandingView</div>
<svg style="position:absolute;left:1891.6px;top:94px;overflow:visible;" width="25" height="21.8" viewBox="0 0 29 25.3"><path d="M18.2,0.2 C24,4 28.5,10 25.8,17.7 C27.5,20 28.5,22 28.8,24.3 C27,22.8 25.5,22 23.8,22.3 C21,24 17.5,25.2 14.5,25.1 C8,25 3,20.5 0,16.4 C5,18.5 11.5,19.5 16.5,17.7 C11,14 6,8.5 3,4.1 C7,7.5 10.5,10 13.9,11.7 C11,8.5 8.5,5.5 6.6,2.5 C11,6.5 16,10.5 20.2,13.1 C21.5,9 21,4 18.2,0.2 Z" fill="#f0683a"/></svg>
<div style="position:absolute;left:1926.8px;top:93.7px;font-family:'Liberation Sans', sans-serif;font-size:23.4px;line-height:1;color:#262626;font-weight:normal;white-space:pre;width:99.2px">TodoItem</div>
<div style="position:absolute;left:966px;top:93px;width:2px;height:24px;background:#e6e6e6;"></div>
<div style="position:absolute;left:1324px;top:93px;width:2px;height:24px;background:#e6e6e6;"></div>
<div style="position:absolute;left:2062px;top:93px;width:2px;height:24px;background:#e6e6e6;"></div>
<svg style="position:absolute;left:2858px;top:90px;overflow:visible;" width="28" height="30" viewBox="0 0 28 30"><g fill="none" stroke="#6e6e6e" stroke-width="1.9" stroke-linecap="round" stroke-linejoin="round"><path d="M7,8.8 L26,8.8 M18.5,2 L26,8.8 L18.5,15.5"/><path d="M21,21 L2.5,21 M8.7,14.5 L2.5,21 L8.7,27.5"/></g></svg>
<svg style="position:absolute;left:2905px;top:91px;overflow:visible;" width="38" height="28" viewBox="0 0 38 28"><g fill="none" stroke="#6e6e6e" stroke-width="1.7"><path d="M1.2,1.9 L12.5,1.9 M1.2,7.9 L16.8,7.9 M1.2,14 L12.5,14 M1.2,20 L16.8,20 M1.2,26 L16.8,26"/><rect x="22" y="1.9" width="14.6" height="24.2"/><rect x="26.3" y="6.4" width="6" height="15.3"/></g></svg>
<div style="position:absolute;left:2960px;top:93px;width:2px;height:24px;background:#e6e6e6;"></div>
<svg style="position:absolute;left:2979px;top:91px;overflow:visible;" width="28" height="28" viewBox="0 0 28 28"><g fill="none" stroke="#6e6e6e" stroke-width="1.9"><rect x="1.3" y="1.3" width="25" height="25" rx="4.8"/><path d="M10,1.3 L10,26.3"/><path d="M17.9,9 L17.9,18.5 M13.2,13.8 L22.6,13.8" stroke-linecap="round"/></g></svg>
<svg style="position:absolute;left:563px;top:147px;overflow:visible;" width="25.5" height="25.5" viewBox="0 0 30 30"><rect x="1" y="1" width="28" height="28" rx="7" fill="#1a82ff" stroke="#0a74ff" stroke-width="2"/><rect x="3.6" y="3.6" width="22.8" height="22.8" rx="4.8" fill="none" stroke="#c4dcf8" stroke-width="1.3"/><g stroke="#ffffff" stroke-width="2.1" stroke-linecap="round" stroke-linejoin="round" fill="none"><path d="M12.9,6.9 L15.2,9.3 L17.5,6.9"/><path d="M15.2,9.6 L10.7,17.6"/><path d="M6.1,18 L16.5,18 M20.4,18 L23.9,18"/><path d="M16.9,12.7 L22,22"/><path d="M8.3,22 L9.7,20.1"/></g></svg>
<div style="position:absolute;left:600.7px;top:150.9px;font-family:'Liberation Sans', sans-serif;font-size:23.1px;line-height:1;color:#262626;font-weight:normal;white-space:pre;">EnhancedTodoList</div>
<div style="position:absolute;left:866.6px;top:150.9px;font-family:'Liberation Sans', sans-serif;font-size:23.1px;line-height:1;color:#262626;font-weight:normal;white-space:pre;">EnhancedTodoList</div>
<div style="position:absolute;left:1133.0px;top:150.9px;font-family:'Liberation Sans', sans-serif;font-size:23.1px;line-height:1;color:#262626;font-weight:normal;white-space:pre;">Views</div>
<div style="position:absolute;left:1266.8px;top:150.9px;font-family:'Liberation Sans', sans-serif;font-size:23.1px;line-height:1;color:#262626;font-weight:normal;white-space:pre;">LandingView</div>
<div style="position:absolute;left:1432.6px;top:150.9px;font-family:'Liberation Sans', sans-serif;font-size:23.1px;line-height:1;color:#262626;font-weight:normal;white-space:pre;">No Selection</div>
<svg style="position:absolute;left:805px;top:151px;overflow:visible;" width="8" height="19" viewBox="0 0 8 19"><path d="M1.5,1.5 L6.5,9.5 L1.5,17.5" fill="none" stroke="#8a8a8a" stroke-width="1.8" stroke-linecap="round" stroke-linejoin="round"/></svg>
<svg style="position:absolute;left:1071.5px;top:151px;overflow:visible;" width="8" height="19" viewBox="0 0 8 19"><path d="M1.5,1.5 L6.5,9.5 L1.5,17.5" fill="none" stroke="#8a8a8a" stroke-width="1.8" stroke-linecap="round" stroke-linejoin="round"/></svg>
<svg style="position:absolute;left:1204.5px;top:151px;overflow:visible;" width="8" height="19" viewBox="0 0 8 19"><path d="M1.5,1.5 L6.5,9.5 L1.5,17.5" fill="none" stroke="#8a8a8a" stroke-width="1.8" stroke-linecap="round" stroke-linejoin="round"/></svg>
<svg style="position:absolute;left:1409.8px;top:151px;overflow:visible;" width="8" height="19" viewBox="0 0 8 19"><path d="M1.5,1.5 L6.5,9.5 L1.5,17.5" fill="none" stroke="#8a8a8a" stroke-width="1.8" stroke-linecap="round" stroke-linejoin="round"/></svg>
<svg style="position:absolute;left:829px;top:150px;overflow:visible;" width="25" height="20.5" viewBox="0 0 29 24"><path d="M0,3 Q0,0 3,0 L10,0 Q12,0 13,2 L13.5,3 L26,3 Q29,3 29,6 L29,21 Q29,24 26,24 L3,24 Q0,24 0,21 Z" fill="#878b90"/><rect x="0" y="6.3" width="29" height="1.6" fill="#f5f5f5" opacity="0.9"/></svg>
<svg style="position:absolute;left:1095px;top:150px;overflow:visible;" width="25" height="20.5" viewBox="0 0 29 24"><path d="M0,3 Q0,0 3,0 L10,0 Q12,0 13,2 L13.5,3 L26,3 Q29,3 29,6 L29,21 Q29,24 26,24 L3,24 Q0,24 0,21 Z" fill="#878b90"/><rect x="0" y="6.3" width="29" height="1.6" fill="#f5f5f5" opacity="0.9"/></svg>
<svg style="position:absolute;left:1230px;top:150px;overflow:visible;" width="24" height="21" viewBox="0 0 29 25.3"><path d="M18.2,0.2 C24,4 28.5,10 25.8,17.7 C27.5,20 28.5,22 28.8,24.3 C27,22.8 25.5,22 23.8,22.3 C21,24 17.5,25.2 14.5,25.1 C8,25 3,20.5 0,16.4 C5,18.5 11.5,19.5 16.5,17.7 C11,14 6,8.5 3,4.1 C7,7.5 10.5,10 13.9,11.7 C11,8.5 8.5,5.5 6.6,2.5 C11,6.5 16,10.5 20.2,13.1 C21.5,9 21,4 18.2,0.2 Z" fill="#f0683a"/></svg>
<div style="position:absolute;left:546px;top:1832px;width:2478px;height:2px;background:#e2e2e2;"></div>
<div style="position:absolute;left:546px;top:1834px;width:2478px;height:54px;background:#ffffff;"></div>
<svg style="position:absolute;left:568px;top:1851px;overflow:visible;" width="31" height="20" viewBox="0 0 31 20"><path d="M3.5,0.5 L23,0.5 Q25,0.5 26.3,2.3 L29.5,8 Q30.5,10 29.5,12 L26.3,17.7 Q25,19.5 23,19.5 L3.5,19.5 Q0.5,19.5 0.5,16.5 L0.5,3.5 Q0.5,0.5 3.5,0.5 Z" fill="#2f7cf6"/></svg>
<div style="position:absolute;left:2775.0px;top:1850.4px;font-family:'Liberation Sans', sans-serif;font-size:23.6px;line-height:1;color:#7a7a7a;font-weight:normal;white-space:pre;">Line: 40  Col: 2</div>
<div style="position:absolute;left:2954px;top:1849px;width:2px;height:24px;background:#e3e3e3;"></div>
<svg style="position:absolute;left:2972px;top:1847px;overflow:visible;" width="28" height="28" viewBox="0 0 28 28"><rect x="1.2" y="1.2" width="25.6" height="25.6" rx="4.5" fill="none" stroke="#6e6e6e" stroke-width="1.9"/><rect x="5.5" y="17.5" width="17" height="5" rx="1" fill="#6e6e6e"/></svg>
<div style="position:absolute;left:546px;top:190px;width:1692px;height:1642px;background:#ffffff;"></div>
<div style="position:absolute;left:546px;top:1752px;width:1692px;height:40px;background:#ecf3fe;"></div>
<div style="position:absolute;left:556px;top:592.5px;width:10.5px;height:119px;box-sizing:border-box;background:#b1cbfd;border:2.2px solid #2870f5;border-radius:5.25px;"></div>
<div style="position:absolute;left:556px;top:752.5px;width:10.5px;height:39px;box-sizing:border-box;background:#b1cbfd;border:2.2px solid #2870f5;border-radius:5.25px;"></div>
<div style="position:absolute;left:556px;top:992.5px;width:10.5px;height:39px;box-sizing:border-box;background:#b1cbfd;border:2.2px solid #2870f5;border-radius:5.25px;"></div>
<div style="position:absolute;left:556px;top:1272.5px;width:10.5px;height:39px;box-sizing:border-box;background:#b1cbfd;border:2.2px solid #2870f5;border-radius:5.25px;"></div>
<div style="position:absolute;left:556px;top:1392.5px;width:10.5px;height:199px;box-sizing:border-box;background:#b1cbfd;border:2.2px solid #2870f5;border-radius:5.25px;"></div>
<div style="position:absolute;left:644px;top:194px;width:14px;height:236px;background:rgba(0,0,0,0.09);border-radius:7px;"></div>
<div style="position:absolute;left:644px;top:554px;width:14px;height:1076px;background:rgba(0,0,0,0.09);border-radius:7px;"></div>
<div style="position:absolute;left:644px;top:1674px;width:14px;height:116px;background:rgba(0,0,0,0.09);border-radius:7px;"></div>
<div style="position:absolute;left:644px;top:714px;width:14px;height:676px;background:#d5d5d5;border-radius:7px;box-shadow:0 0 0 1.5px #ffffff;"></div>
<div style="position:absolute;left:644px;top:1474px;width:14px;height:116px;background:#d5d5d5;border-radius:7px;box-shadow:0 0 0 1.5px #ffffff;"></div>
<div style="position:absolute;left:644px;top:754px;width:14px;height:596px;background:#c1c1c1;border-radius:7px;box-shadow:0 0 0 1.5px #ffffff;"></div>
<div style="position:absolute;left:644px;top:834px;width:14px;height:156px;background:#adadad;border-radius:7px;box-shadow:0 0 0 1.5px #ffffff;"></div>
<div style="position:absolute;left:644px;top:1114px;width:14px;height:156px;background:#adadad;border-radius:7px;box-shadow:0 0 0 1.5px #ffffff;"></div>
<div style="position:absolute;left:534px;width:100px;text-align:right;top:201.0px;font-family:'Liberation Sans', sans-serif;font-size:26.5px;line-height:1;color:#a8a8a8;white-space:pre;transform:scale(0.98,1.08);transform-origin:100% 85%">1</div>
<div style="position:absolute;left:534px;width:100px;text-align:right;top:241.0px;font-family:'Liberation Sans', sans-serif;font-size:26.5px;line-height:1;color:#a8a8a8;white-space:pre;transform:scale(0.98,1.08);transform-origin:100% 85%">2</div>
<div style="position:absolute;left:534px;width:100px;text-align:right;top:281.0px;font-family:'Liberation Sans', sans-serif;font-size:26.5px;line-height:1;color:#a8a8a8;white-space:pre;transform:scale(0.98,1.08);transform-origin:100% 85%">3</div>
<div style="position:absolute;left:534px;width:100px;text-align:right;top:321.0px;font-family:'Liberation Sans', sans-serif;font-size:26.5px;line-height:1;color:#a8a8a8;white-space:pre;transform:scale(0.98,1.08);transform-origin:100% 85%">4</div>
<div style="position:absolute;left:534px;width:100px;text-align:right;top:361.0px;font-family:'Liberation Sans', sans-serif;font-size:26.5px;line-height:1;color:#a8a8a8;white-space:pre;transform:scale(0.98,1.08);transform-origin:100% 85%">5</div>
<div style="position:absolute;left:534px;width:100px;text-align:right;top:401.0px;font-family:'Liberation Sans', sans-serif;font-size:26.5px;line-height:1;color:#a8a8a8;white-space:pre;transform:scale(0.98,1.08);transform-origin:100% 85%">6</div>
<div style="position:absolute;left:534px;width:100px;text-align:right;top:441.0px;font-family:'Liberation Sans', sans-serif;font-size:26.5px;line-height:1;color:#a8a8a8;white-space:pre;transform:scale(0.98,1.08);transform-origin:100% 85%">7</div>
<div style="position:absolute;left:534px;width:100px;text-align:right;top:481.0px;font-family:'Liberation Sans', sans-serif;font-size:26.5px;line-height:1;color:#a8a8a8;white-space:pre;transform:scale(0.98,1.08);transform-origin:100% 85%">8</div>
<div style="position:absolute;left:534px;width:100px;text-align:right;top:521.0px;font-family:'Liberation Sans', sans-serif;font-size:26.5px;line-height:1;color:#a8a8a8;white-space:pre;transform:scale(0.98,1.08);transform-origin:100% 85%">9</div>
<div style="position:absolute;left:534px;width:100px;text-align:right;top:561.0px;font-family:'Liberation Sans', sans-serif;font-size:26.5px;line-height:1;color:#a8a8a8;white-space:pre;transform:scale(0.98,1.08);transform-origin:100% 85%">10</div>
<div style="position:absolute;left:534px;width:100px;text-align:right;top:601.0px;font-family:'Liberation Sans', sans-serif;font-size:26.5px;line-height:1;color:#a8a8a8;white-space:pre;transform:scale(0.98,1.08);transform-origin:100% 85%">11</div>
<div style="position:absolute;left:534px;width:100px;text-align:right;top:641.0px;font-family:'Liberation Sans', sans-serif;font-size:26.5px;line-height:1;color:#a8a8a8;white-space:pre;transform:scale(0.98,1.08);transform-origin:100% 85%">12</div>
<div style="position:absolute;left:534px;width:100px;text-align:right;top:681.0px;font-family:'Liberation Sans', sans-serif;font-size:26.5px;line-height:1;color:#a8a8a8;white-space:pre;transform:scale(0.98,1.08);transform-origin:100% 85%">13</div>
<div style="position:absolute;left:534px;width:100px;text-align:right;top:721.0px;font-family:'Liberation Sans', sans-serif;font-size:26.5px;line-height:1;color:#a8a8a8;white-space:pre;transform:scale(0.98,1.08);transform-origin:100% 85%">14</div>
<div style="position:absolute;left:534px;width:100px;text-align:right;top:761.0px;font-family:'Liberation Sans', sans-serif;font-size:26.5px;line-height:1;color:#a8a8a8;white-space:pre;transform:scale(0.98,1.08);transform-origin:100% 85%">15</div>
<div style="position:absolute;left:534px;width:100px;text-align:right;top:801.0px;font-family:'Liberation Sans', sans-serif;font-size:26.5px;line-height:1;color:#a8a8a8;white-space:pre;transform:scale(0.98,1.08);transform-origin:100% 85%">16</div>
<div style="position:absolute;left:534px;width:100px;text-align:right;top:841.0px;font-family:'Liberation Sans', sans-serif;font-size:26.5px;line-height:1;color:#a8a8a8;white-space:pre;transform:scale(0.98,1.08);transform-origin:100% 85%">17</div>
<div style="position:absolute;left:534px;width:100px;text-align:right;top:881.0px;font-family:'Liberation Sans', sans-serif;font-size:26.5px;line-height:1;color:#a8a8a8;white-space:pre;transform:scale(0.98,1.08);transform-origin:100% 85%">18</div>
<div style="position:absolute;left:534px;width:100px;text-align:right;top:921.0px;font-family:'Liberation Sans', sans-serif;font-size:26.5px;line-height:1;color:#a8a8a8;white-space:pre;transform:scale(0.98,1.08);transform-origin:100% 85%">19</div>
<div style="position:absolute;left:534px;width:100px;text-align:right;top:961.0px;font-family:'Liberation Sans', sans-serif;font-size:26.5px;line-height:1;color:#a8a8a8;white-space:pre;transform:scale(0.98,1.08);transform-origin:100% 85%">20</div>
<div style="position:absolute;left:534px;width:100px;text-align:right;top:1001.0px;font-family:'Liberation Sans', sans-serif;font-size:26.5px;line-height:1;color:#a8a8a8;white-space:pre;transform:scale(0.98,1.08);transform-origin:100% 85%">21</div>
<div style="position:absolute;left:534px;width:100px;text-align:right;top:1041.0px;font-family:'Liberation Sans', sans-serif;font-size:26.5px;line-height:1;color:#a8a8a8;white-space:pre;transform:scale(0.98,1.08);transform-origin:100% 85%">22</div>
<div style="position:absolute;left:534px;width:100px;text-align:right;top:1081.0px;font-family:'Liberation Sans', sans-serif;font-size:26.5px;line-height:1;color:#a8a8a8;white-space:pre;transform:scale(0.98,1.08);transform-origin:100% 85%">23</div>
<div style="position:absolute;left:534px;width:100px;text-align:right;top:1121.0px;font-family:'Liberation Sans', sans-serif;font-size:26.5px;line-height:1;color:#a8a8a8;white-space:pre;transform:scale(0.98,1.08);transform-origin:100% 85%">24</div>
<div style="position:absolute;left:534px;width:100px;text-align:right;top:1161.0px;font-family:'Liberation Sans', sans-serif;font-size:26.5px;line-height:1;color:#a8a8a8;white-space:pre;transform:scale(0.98,1.08);transform-origin:100% 85%">25</div>
<div style="position:absolute;left:534px;width:100px;text-align:right;top:1201.0px;font-family:'Liberation Sans', sans-serif;font-size:26.5px;line-height:1;color:#a8a8a8;white-space:pre;transform:scale(0.98,1.08);transform-origin:100% 85%">26</div>
<div style="position:absolute;left:534px;width:100px;text-align:right;top:1241.0px;font-family:'Liberation Sans', sans-serif;font-size:26.5px;line-height:1;color:#a8a8a8;white-space:pre;transform:scale(0.98,1.08);transform-origin:100% 85%">27</div>
<div style="position:absolute;left:534px;width:100px;text-align:right;top:1281.0px;font-family:'Liberation Sans', sans-serif;font-size:26.5px;line-height:1;color:#a8a8a8;white-space:pre;transform:scale(0.98,1.08);transform-origin:100% 85%">28</div>
<div style="position:absolute;left:534px;width:100px;text-align:right;top:1321.0px;font-family:'Liberation Sans', sans-serif;font-size:26.5px;line-height:1;color:#a8a8a8;white-space:pre;transform:scale(0.98,1.08);transform-origin:100% 85%">29</div>
<div style="position:absolute;left:534px;width:100px;text-align:right;top:1361.0px;font-family:'Liberation Sans', sans-serif;font-size:26.5px;line-height:1;color:#a8a8a8;white-space:pre;transform:scale(0.98,1.08);transform-origin:100% 85%">30</div>
<div style="position:absolute;left:534px;width:100px;text-align:right;top:1401.0px;font-family:'Liberation Sans', sans-serif;font-size:26.5px;line-height:1;color:#a8a8a8;white-space:pre;transform:scale(0.98,1.08);transform-origin:100% 85%">31</div>
<div style="position:absolute;left:534px;width:100px;text-align:right;top:1441.0px;font-family:'Liberation Sans', sans-serif;font-size:26.5px;line-height:1;color:#a8a8a8;white-space:pre;transform:scale(0.98,1.08);transform-origin:100% 85%">32</div>
<div style="position:absolute;left:534px;width:100px;text-align:right;top:1481.0px;font-family:'Liberation Sans', sans-serif;font-size:26.5px;line-height:1;color:#a8a8a8;white-space:pre;transform:scale(0.98,1.08);transform-origin:100% 85%">33</div>
<div style="position:absolute;left:534px;width:100px;text-align:right;top:1521.0px;font-family:'Liberation Sans', sans-serif;font-size:26.5px;line-height:1;color:#a8a8a8;white-space:pre;transform:scale(0.98,1.08);transform-origin:100% 85%">34</div>
<div style="position:absolute;left:534px;width:100px;text-align:right;top:1561.0px;font-family:'Liberation Sans', sans-serif;font-size:26.5px;line-height:1;color:#a8a8a8;white-space:pre;transform:scale(0.98,1.08);transform-origin:100% 85%">35</div>
<div style="position:absolute;left:534px;width:100px;text-align:right;top:1601.0px;font-family:'Liberation Sans', sans-serif;font-size:26.5px;line-height:1;color:#a8a8a8;white-space:pre;transform:scale(0.98,1.08);transform-origin:100% 85%">36</div>
<div style="position:absolute;left:534px;width:100px;text-align:right;top:1641.0px;font-family:'Liberation Sans', sans-serif;font-size:26.5px;line-height:1;color:#a8a8a8;white-space:pre;transform:scale(0.98,1.08);transform-origin:100% 85%">37</div>
<div style="position:absolute;left:534px;width:100px;text-align:right;top:1681.0px;font-family:'Liberation Sans', sans-serif;font-size:26.5px;line-height:1;color:#a8a8a8;white-space:pre;transform:scale(0.98,1.08);transform-origin:100% 85%">38</div>
<div style="position:absolute;left:534px;width:100px;text-align:right;top:1721.0px;font-family:'Liberation Sans', sans-serif;font-size:26.5px;line-height:1;color:#a8a8a8;white-space:pre;transform:scale(0.98,1.08);transform-origin:100% 85%">39</div>
<div style="position:absolute;left:534px;width:100px;text-align:right;top:1761.0px;font-family:'Liberation Sans', sans-serif;font-size:26.5px;line-height:1;color:#1a1a1a;white-space:pre;transform:scale(0.98,1.08);transform-origin:100% 85%">40</div>
<div style="position:absolute;left:534px;width:100px;text-align:right;top:1801.0px;font-family:'Liberation Sans', sans-serif;font-size:26.5px;line-height:1;color:#a8a8a8;white-space:pre;transform:scale(0.98,1.08);transform-origin:100% 85%">41</div>
<div style="position:absolute;left:682.5px;top:194px;font-family:'Liberation Mono', monospace;font-size:30.83px;line-height:40px;color:#000;white-space:pre"><span style="color:#677585">//</span>
<span style="color:#677585">//  LandingView.swift</span>
<span style="color:#677585">//  EnhancedTodoList</span>
<span style="color:#677585">//</span>
<span style="color:#677585">//  Created by Russell Gordon on 2024-01-18.</span>
<span style="color:#677585">//</span>

<b style="color:#9e3095">import</b> SwiftUI

<b style="color:#9e3095">struct</b> <span style="color:#17568a">LandingView</span>: <span style="color:#4222a6">View</span> {

    <span style="color:#4222a6">@State</span> <b style="color:#9e3095">var</b> <span style="color:#2870a8">selectedTab</span> = <span style="color:#1c00cf">1</span>

    <b style="color:#9e3095">var</b> <span style="color:#2870a8">body</span>: <b style="color:#9e3095">some</b> <span style="color:#4222a6">View</span> {
        <span style="color:#4222a6">TabView</span>(<span style="color:#7447b0">selection</span>: <span style="color:#38747a">$selectedTab</span>) {
            <span style="color:#27505a">TodoListView</span>()
                .<span style="color:#7447b0">tabItem</span> {
                    <span style="color:#4222a6">Text</span>(<span style="color:#c4301d">&quot;Tasks&quot;</span>)
                    <span style="color:#4222a6">Image</span>(<span style="color:#7447b0">systemName</span>: <span style="color:#c4301d">&quot;checklist&quot;</span>)
                }
                .<span style="color:#7447b0">tag</span>(<span style="color:#1c00cf">1</span>)

            <span style="color:#27505a">StatisticsView</span>()
                .<span style="color:#7447b0">tabItem</span> {
                    <span style="color:#4222a6">Text</span>(<span style="color:#c4301d">&quot;Stats&quot;</span>)
                    <span style="color:#4222a6">Image</span>(<span style="color:#7447b0">systemName</span>: <span style="color:#c4301d">&quot;chart.line.uptrend.xyaxis&quot;</span>)
                }
                .<span style="color:#7447b0">tag</span>(<span style="color:#1c00cf">2</span>)
        }
    }

    <span style="color:#677585">// Allow the selected tab to be passed in</span>
    <b style="color:#9e3095">init</b>(<span style="color:#2870a8">selectedTab</span>: <span style="color:#4222a6">Int</span> = <span style="color:#1c00cf">1</span>) {
        <span style="color:#38747a">_selectedTab</span> = <span style="color:#4222a6">State</span>(<span style="color:#7447b0">initialValue</span>: selectedTab)
    }
}

<span style="color:#7447b0">#Preview</span> {
    <span style="color:#27505a">LandingView</span>()
}
</div>
<div style="position:absolute;left:2240px;top:190px;width:784px;height:1642px;background:#f2f2f2;"></div>
<div style="position:absolute;left:2238px;top:190px;width:2px;height:1642px;background:#e3e3e3;"></div>
<div style="position:absolute;left:2264px;top:214px;width:63px;height:52px;background:#ffffff;border-radius:12px;box-shadow:0 0.5px 2px rgba(0,0,0,0.18), 0 0 0 0.5px rgba(0,0,0,0.05);"></div>
<svg style="position:absolute;left:2282px;top:224px;overflow:visible;" width="26" height="32" viewBox="0 0 26 32"><g fill="none" stroke="#4a4a4a" stroke-width="2.2" stroke-linecap="round" stroke-linejoin="round"><path d="M6,2.5 L20,2.5 M8.5,2.5 L9.5,10 Q3,13.5 3.5,18.5 L22.5,18.5 Q23,13.5 16.5,10 L17.5,2.5"/><path d="M13,18.5 L13,29"/></g></svg>
<div style="position:absolute;left:2347px;top:214px;width:202px;height:52px;background:#cfe0fb;border-radius:12px;box-shadow:0 0.5px 2px rgba(0,0,0,0.18), 0 0 0 0.5px rgba(0,0,0,0.05);"></div>
<svg style="position:absolute;left:2363px;top:225px;overflow:visible;" width="26" height="28" viewBox="0 0 26 28"><g fill="none" stroke="#3478f6" stroke-width="2" stroke-linecap="round"><rect x="2" y="8.5" width="21.5" height="17" rx="2.6"/><path d="M5,5 L20.5,5 M7,1.8 L18.5,1.8"/></g></svg>
<div style="position:absolute;left:2400.0px;top:229.4px;font-family:'Liberation Sans', sans-serif;font-size:23.1px;line-height:1;color:#3478f6;font-weight:normal;white-space:pre;">LandingView</div>
<div style="position:absolute;left:2330px;top:617px;width:10px;height:46px;background:#2e2e2e;border-radius:2px 0 0 2px;"></div>
<div style="position:absolute;left:2330px;top:702px;width:10px;height:87px;background:#2e2e2e;border-radius:2px 0 0 2px;"></div>
<div style="position:absolute;left:2330px;top:814px;width:10px;height:86px;background:#2e2e2e;border-radius:2px 0 0 2px;"></div>
<div style="position:absolute;left:2924px;top:757px;width:9px;height:140px;background:#2e2e2e;border-radius:0 2px 2px 0;"></div>
<div style="position:absolute;left:2338px;top:399px;width:587px;height:1224px;background:#2f2f2f;border-radius:108px;box-shadow:0 0 1px rgba(0,0,0,0.4);"></div>
<div style="position:absolute;left:2798px;top:399px;width:4px;height:7px;background:#1e1e1e;"></div>
<div style="position:absolute;left:2464px;top:1616px;width:4px;height:7px;background:#1e1e1e;"></div>
<div style="position:absolute;left:2338px;top:528px;width:7px;height:9px;background:#1e1e1e;"></div>
<div style="position:absolute;left:2918px;top:528px;width:7px;height:9px;background:#1e1e1e;"></div>
<div style="position:absolute;left:2338px;top:1488px;width:7px;height:9px;background:#1e1e1e;"></div>
<div style="position:absolute;left:2918px;top:1488px;width:7px;height:9px;background:#1e1e1e;"></div>
<div style="position:absolute;left:2345px;top:406px;width:574px;height:1210px;background:#000000;border-radius:101px;"></div>
<div style="position:absolute;left:2360px;top:420px;width:545px;height:1181px;background:#ffffff;border-radius:86px;"></div>
<div style="position:absolute;left:2545px;top:435.5px;width:174px;height:51px;background:#000000;border-radius:26px;"></div>
<div style="position:absolute;left:2381.5px;top:568.4px;font-family:'Liberation Sans', sans-serif;font-size:44.2px;line-height:1;color:#000000;font-weight:bold;white-space:pre;">Tasks</div>
<div style="position:absolute;left:2388.8px;top:659.3px;font-family:'Liberation Sans', sans-serif;font-size:23.8px;line-height:1;color:#c4c4c6;font-weight:normal;white-space:pre;">Enter a to-do item</div>
<div style="position:absolute;left:2836.0px;top:659.7px;font-family:'Liberation Sans', sans-serif;font-size:23.3px;line-height:1;color:#3478f6;font-weight:normal;white-space:pre;">Add</div>
<svg style="position:absolute;left:2595px;top:995px" width="75" height="75" viewBox="2595 995 75 75"><defs><mask id="moonm"><rect x="2595" y="995" width="75" height="75" fill="#fff"/><circle cx="2653.4" cy="1018.7" r="34.6" fill="#000"/></mask></defs><circle cx="2635.5" cy="1033.3" r="32.6" fill="#a8dfae" mask="url(#moonm)"/></svg>
<div style="position:absolute;left:2537.8px;top:1095.6px;font-family:'Liberation Sans', sans-serif;font-size:29.3px;line-height:1;color:#65c466;font-weight:bold;white-space:pre;">Nothing to do</div>
<div style="position:absolute;left:2400px;width:465px;top:1133.8px;font-family:'Liberation Sans', sans-serif;font-size:21.4px;line-height:27.4px;color:#8e8e93;text-align:center">To-do items will appear here once you<br>add some.</div>
<svg style="position:absolute;left:2476px;top:1494px;overflow:visible;" width="40" height="36" viewBox="0 0 40 36"><circle cx="9" cy="9" r="7" fill="#3478f6"/><path d="M5.6,9.2 L8,11.6 L12.4,6.6" fill="none" stroke="#fff" stroke-width="1.7" stroke-linecap="round" stroke-linejoin="round"/><circle cx="9" cy="27.5" r="5.8" fill="none" stroke="#3478f6" stroke-width="2.2"/><path d="M19.5,9 L36.5,9 M19.5,27.5 L36.5,27.5" stroke="#3478f6" stroke-width="2.2" stroke-linecap="round"/></svg>
<div style="position:absolute;left:2478.0px;top:1536.4px;font-family:'Liberation Sans', sans-serif;font-size:14.8px;line-height:1;color:#3478f6;font-weight:normal;white-space:pre;-webkit-text-stroke:0.4px #3478f6">Tasks</div>
<svg style="position:absolute;left:2749px;top:1495px;overflow:visible;" width="40" height="34" viewBox="0 0 40 34"><path d="M3.5,2.5 L3.5,30.5 L35,30.5" fill="none" stroke="#9a9a9a" stroke-width="2.4" stroke-linecap="square"/><path d="M4,23 L12,14.5 L19,20.5 L30.5,11" fill="none" stroke="#9a9a9a" stroke-width="2.4" stroke-linejoin="round"/><path d="M26,5.5 L35.5,3.8 L33.5,13.5 Z" fill="#9a9a9a"/></svg>
<div style="position:absolute;left:2751.5px;top:1536.4px;font-family:'Liberation Sans', sans-serif;font-size:14.8px;line-height:1;color:#9a9a9a;font-weight:normal;white-space:pre;-webkit-text-stroke:0.4px #9a9a9a">Stats</div>
<div style="position:absolute;left:2264px;top:1756px;width:163px;height:52px;background:#ffffff;border-radius:13px;box-shadow:0 0.5px 2.5px rgba(0,0,0,0.2), 0 0 0 0.5px rgba(0,0,0,0.04);"></div>
<div style="position:absolute;left:2447px;top:1756px;width:63px;height:52px;background:#ffffff;border-radius:13px;box-shadow:0 0.5px 2.5px rgba(0,0,0,0.2), 0 0 0 0.5px rgba(0,0,0,0.04);"></div>
<div style="position:absolute;left:2530px;top:1756px;width:54px;height:52px;background:#ffffff;border-radius:13px;box-shadow:0 0.5px 2.5px rgba(0,0,0,0.2), 0 0 0 0.5px rgba(0,0,0,0.04);"></div>
<div style="position:absolute;left:2792px;top:1756px;width:207px;height:52px;background:#ffffff;border-radius:13px;box-shadow:0 0.5px 2.5px rgba(0,0,0,0.2), 0 0 0 0.5px rgba(0,0,0,0.04);"></div>
<svg style="position:absolute;left:2282px;top:1769px;overflow:visible;" width="26" height="26" viewBox="0 0 26 26"><circle cx="13" cy="13" r="13" fill="#3478f6"/><path d="M9.2,7.6 L18.8,13 L9.2,18.4 Z" fill="#ffffff" stroke="#ffffff" stroke-width="1.2" stroke-linejoin="round"/></svg>
<svg style="position:absolute;left:2329px;top:1769px;overflow:visible;" width="26" height="26" viewBox="0 0 26 26"><rect x="2" y="2" width="22" height="22" rx="3" fill="none" stroke="#4a4a4a" stroke-width="2"/><path d="M9,7 L9,19.5 L12,16.5 L14.5,21 L16.2,20 L13.8,15.6 L17.8,15.2 Z" fill="#4a4a4a"/></svg>
<svg style="position:absolute;left:2383px;top:1771px;overflow:visible;" width="25" height="22" viewBox="0 0 25 22"><rect x="1.4" y="1.6" width="5.2" height="7.8" rx="1.5" fill="none" stroke="#4a4a4a" stroke-width="1.6"/><rect x="1.4" y="12.0" width="5.2" height="7.8" rx="1.5" fill="none" stroke="#4a4a4a" stroke-width="1.6"/><rect x="9.5" y="1.6" width="5.2" height="7.8" rx="1.5" fill="none" stroke="#4a4a4a" stroke-width="1.6"/><rect x="9.5" y="12.0" width="5.2" height="7.8" rx="1.5" fill="none" stroke="#4a4a4a" stroke-width="1.6"/><rect x="17.599999999999998" y="1.6" width="5.2" height="7.8" rx="1.5" fill="none" stroke="#4a4a4a" stroke-width="1.6"/><rect x="17.599999999999998" y="12.0" width="5.2" height="7.8" rx="1.5" fill="none" stroke="#4a4a4a" stroke-width="1.6"/></svg>
<svg style="position:absolute;left:2465px;top:1769px;overflow:visible;" width="27" height="27" viewBox="0 0 27 27"><rect x="1.8" y="1.6" width="23.4" height="10.6" rx="5.3" fill="none" stroke="#4a4a4a" stroke-width="2"/><circle cx="7" cy="6.9" r="3" fill="#4a4a4a"/><rect x="0.8" y="15" width="25.4" height="11.4" rx="5.7" fill="#4a4a4a"/><circle cx="20" cy="20.7" r="3.6" fill="#fff"/></svg>
<svg style="position:absolute;left:2549px;top:1770px;overflow:visible;" width="16" height="25" viewBox="0 0 16 25"><rect x="1.1" y="1.1" width="13.8" height="22.6" rx="2.8" fill="#d9d9d9" stroke="#4a4a4a" stroke-width="2"/><path d="M6,4 L10,4 M6,20.8 L10,20.8" stroke="#4a4a4a" stroke-width="1.2"/></svg>
<svg style="position:absolute;left:2811.4px;top:1769px;overflow:visible;" width="26" height="26" viewBox="0 0 26 26"><circle cx="9.5" cy="10" r="8.6" fill="none" stroke="#4a4a4a" stroke-width="2.4"/><path d="M15.8,16.3 L22,22.5" stroke="#4a4a4a" stroke-width="2.8" stroke-linecap="round"/><path d="M5.5,10 L12.5,10" stroke="#4a4a4a" stroke-width="2" stroke-linecap="round"/></svg>
<svg style="position:absolute;left:2859.4px;top:1769px;overflow:visible;" width="26" height="26" viewBox="0 0 26 26"><circle cx="9.5" cy="10" r="8.6" fill="none" stroke="#4a4a4a" stroke-width="2.4"/><path d="M15.8,16.3 L22,22.5" stroke="#4a4a4a" stroke-width="2.8" stroke-linecap="round"/><path d="M7.3,8 L9.6,6.3 L9.6,14" fill="none" stroke="#4a4a4a" stroke-width="1.8" stroke-linecap="round" stroke-linejoin="round"/></svg>
<svg style="position:absolute;left:2907.2px;top:1769px;overflow:visible;" width="26" height="26" viewBox="0 0 26 26"><circle cx="9.5" cy="10" r="8.6" fill="none" stroke="#4a4a4a" stroke-width="2.4"/><path d="M15.8,16.3 L22,22.5" stroke="#4a4a4a" stroke-width="2.8" stroke-linecap="round"/><rect x="6" y="6.5" width="6.2" height="6.2" rx="1.2" fill="none" stroke="#4a4a4a" stroke-width="1.9"/></svg>
<svg style="position:absolute;left:2955.3px;top:1769px;overflow:visible;" width="26" height="26" viewBox="0 0 26 26"><circle cx="9.5" cy="10" r="8.6" fill="none" stroke="#4a4a4a" stroke-width="2.4"/><path d="M15.8,16.3 L22,22.5" stroke="#4a4a4a" stroke-width="2.8" stroke-linecap="round"/><path d="M5.5,10 L12.5,10 M9,6.5 L9,13.5" stroke="#4a4a4a" stroke-width="2" stroke-linecap="round"/></svg></body></html>
